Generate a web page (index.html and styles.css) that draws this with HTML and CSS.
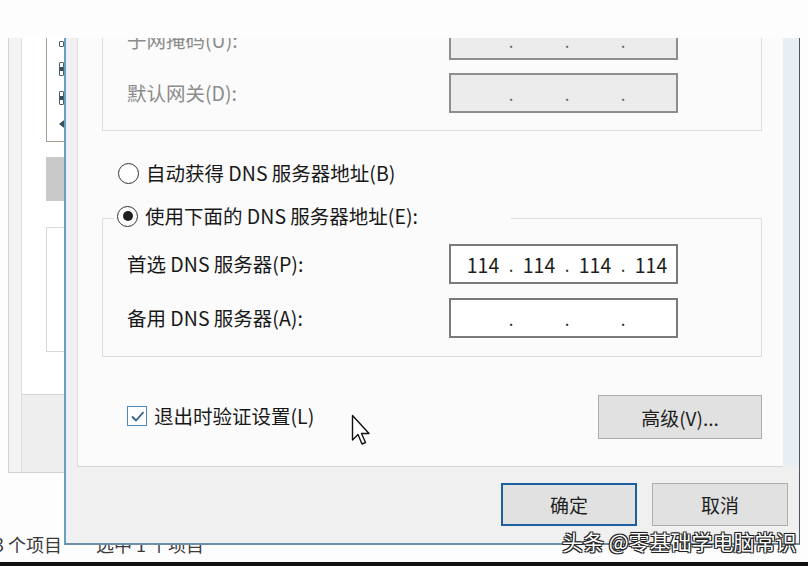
FILE: index.html
```html
<!DOCTYPE html>
<html lang="zh-CN">
<head>
  <meta charset="UTF-8" />
  <meta name="viewport" content="width=device-width, initial-scale=1.0" />
  <title>Internet 协议版本 4 (TCP/IPv4) 属性</title>
  <link rel="stylesheet" href="styles.css">
</head>
<body>
  <div class="screen">
    <div class="top-band"></div>

    <div class="desktop">
      <!-- explorer window behind the dialog -->
      <div class="explorer">
        <div class="nav-pane">
          <div class="nav-strip"></div>
          <div class="nav-list">
            <div class="tree-box">
              <span class="mark mark-sq"></span>
              <span class="mark mark-tall"></span>
              <span class="mark mark-tall"></span>
              <span class="mark mark-arrow"></span>
            </div>
            <div class="tree-gray"></div>
            <div class="tree-box2"></div>
          </div>
        </div>
        <div class="status">
          <span>3 个项目</span>
          <span>选中 1 个项目</span>
        </div>
      </div>

      <!-- IPv4 properties dialog -->
      <div class="dialog">
        <div class="dialog-body">
          <div class="page">
            <div class="group ip-group">
              <div class="row">
                <span class="label disabled">子网掩码(U):</span>
                <div class="ip disabled"><span class="field"></span><span class="dot">.</span><span class="field"></span><span class="dot">.</span><span class="field"></span><span class="dot">.</span><span class="field"></span></div>
              </div>
              <div class="row">
                <span class="label disabled">默认网关(D):</span>
                <div class="ip disabled"><span class="field"></span><span class="dot">.</span><span class="field"></span><span class="dot">.</span><span class="field"></span><span class="dot">.</span><span class="field"></span></div>
              </div>
            </div>

            <label class="option auto-dns">
              <span class="radio"></span>
              <span class="option-text">自动获得 DNS 服务器地址(B)</span>
            </label>

            <fieldset class="group dns-group">
              <legend class="option">
                <span class="radio checked"></span>
                <span class="option-text">使用下面的 DNS 服务器地址(E):</span>
              </legend>
              <div class="row">
                <span class="label">首选 DNS 服务器(P):</span>
                <div class="ip"><span class="field">114</span><span class="dot">.</span><span class="field">114</span><span class="dot">.</span><span class="field">114</span><span class="dot">.</span><span class="field">114</span></div>
              </div>
              <div class="row">
                <span class="label">备用 DNS 服务器(A):</span>
                <div class="ip"><span class="field"></span><span class="dot">.</span><span class="field"></span><span class="dot">.</span><span class="field"></span><span class="dot">.</span><span class="field"></span></div>
              </div>
            </fieldset>

            <div class="page-footer">
              <label class="option validate">
                <span class="check">
                  <svg width="17" height="17" viewBox="0 0 17 17"><path d="M3 8.5 L7 12.5 L14.5 4" fill="none" stroke="#2f5f8a" stroke-width="1.8"/></svg>
                </span>
                <span class="option-text">退出时验证设置(L)</span>
              </label>
              <button class="btn advanced">高级(V)...</button>
            </div>
          </div>
          <div class="side-strip"></div>
        </div>

        <div class="buttons">
          <button class="btn primary">确定</button>
          <button class="btn">取消</button>
        </div>
      </div>

      <svg class="cursor" width="22" height="34" viewBox="0 0 22 34">
        <path d="M1.5 1.5 L1.5 26 L7 20.5 L11 30 L14.5 28.5 L10.5 19.5 L18 19.5 Z" fill="#fff" stroke="#111" stroke-width="1.4" stroke-linejoin="round"/>
      </svg>
    </div>

    <div class="watermark">头条 @零基础学电脑常识</div>
    <div class="bottom-edge"></div>
  </div>
</body>
</html>
```

FILE: styles.css
```css
* {
  box-sizing: border-box;
}

body {
  margin: 0;
  background: #fdfdfd;
  font-family: "Noto Sans CJK SC", "Noto Sans", sans-serif;
  color: #181818;
}

.screen {
  position: relative;
  width: 808px;
  height: 566px;
  overflow: hidden;
  background: #fdfdfd;
}

.top-band {
  height: 38px;
  background: #fdfdfd;
}

.desktop {
  position: relative;
  height: 524px;
}

/* explorer behind */
.explorer {
  height: 100%;
  display: flex;
  flex-direction: column;
}

.nav-pane {
  margin-left: 8px;
  width: 90px;
  height: 435px;
  display: flex;
  background: #eeeeee;
  border-left: 1px solid #d2d2d2;
  border-bottom: 1px solid #d2d2d2;
}

.nav-strip {
  width: 13px;
  background: #f4f4f4;
  border-right: 1px solid #dedede;
}

.nav-list {
  flex: 1;
  height: 357px;
  padding-left: 24px;
  display: flex;
  flex-direction: column;
  background: #fff;
  border-bottom: 1px solid #d4d4d4;
}

.tree-box {
  height: 104px;
  padding: 3px 0 0 12px;
  display: flex;
  flex-direction: column;
  gap: 15px;
  border-left: 1px solid #a89d91;
  border-bottom: 1px solid #a89d91;
}

.mark {
  display: block;
  width: 5px;
  border: 1px solid #4a5e6c;
  border-radius: 1px;
}

.mark-sq {
  height: 6px;
}

.mark-tall {
  height: 14px;
  background: linear-gradient(#fff 30%, #3a4c58 30%, #3a4c58 70%, #fff 70%);
}

.mark-arrow {
  width: 0;
  height: 0;
  border: none;
  border-top: 4px solid transparent;
  border-bottom: 4px solid transparent;
  border-right: 5px solid #3a4c58;
}

.tree-gray {
  margin-top: 15px;
  height: 44px;
  background: #c9c9c9;
}

.tree-box2 {
  margin-top: 26px;
  height: 125px;
  border: 1px solid #d8d8d8;
}

.status {
  margin-top: auto;
  margin-bottom: 7px;
  margin-left: -6px;
  display: flex;
  gap: 34px;
  font-size: 18px;
  line-height: 22px;
  color: #3a3a3a;
}

/* dialog */
.dialog {
  position: absolute;
  left: 64px;
  top: 0;
  width: 736px;
  height: 507px;
  display: flex;
  flex-direction: column;
  background: #f0f0f0;
  border-left: 2px solid #62a2c0;
  border-right: 1px solid #4c5864;
  border-bottom: 2px solid #6f8fa7;
}

.dialog-body {
  height: 429px;
  display: flex;
  padding-left: 11px;
}

.page {
  width: 706px;
  height: 100%;
  padding: 0 21px 0 24px;
  display: flex;
  flex-direction: column;
  overflow: hidden;
  background: #fbfbfb;
  border-left: 1px solid #dcdcdc;
  border-bottom: 1px solid #d6d6d6;
}

.side-strip {
  flex: 1;
  background: #e9eef2;
}

.group {
  margin: 0;
  border: 1px solid #dcdcdc;
  min-width: 0;
}

.ip-group {
  margin-top: -30px;
  padding: 11px 0 17px 24px;
  display: flex;
  flex-direction: column;
  gap: 13px;
}

.row {
  display: grid;
  grid-template-columns: 322px 229px;
  align-items: center;
}

.label {
  font-size: 19.5px;
  line-height: 26px;
}

.label.disabled {
  color: #8c8c8c;
}

.ip {
  height: 40px;
  padding-left: 7px;
  display: flex;
  align-items: center;
  background: #fff;
  border: 2px solid #7a7a7a;
  font-size: 19.5px;
  color: #1e1e1e;
}

.ip.disabled {
  background: #ececec;
  border-color: #8e8e8e;
  color: #666;
}

.field {
  width: 50px;
  text-align: center;
}

.dot {
  width: 6px;
  text-align: center;
  font-size: 17px;
}

.option {
  display: flex;
  align-items: center;
  font-size: 19.5px;
  line-height: 24px;
}

.option-text {
  margin-left: 7px;
}

.auto-dns {
  margin: 30px 0 0 16px;
}

.radio {
  width: 21px;
  height: 21px;
  display: grid;
  place-items: center;
  border: 1.5px solid #333;
  border-radius: 50%;
  background: #fff;
}

.radio.checked::after {
  content: "";
  width: 10px;
  height: 10px;
  border-radius: 50%;
  background: #1f1f1f;
}

.dns-group {
  margin-top: 19px;
  padding: 12px 0 18px 0;
  display: flex;
  flex-direction: column;
  gap: 14px;
}

.dns-group .row {
  padding-left: 24px;
  grid-template-columns: 322px 229px;
}

.dns-group legend {
  width: 397px;
  height: 28px;
  margin-left: 11px;
  padding: 0 0 4px 3px;
  background: #fbfbfb;
}

.page-footer {
  margin-top: 38px;
  display: flex;
  justify-content: space-between;
  align-items: flex-start;
}

.validate {
  margin: 9px 0 0 25px;
}

.check {
  width: 20px;
  height: 20px;
  display: grid;
  place-items: center;
  background: #fff;
  border: 1.5px solid #4f86b5;
}

.btn {
  width: 136px;
  height: 43px;
  font-family: inherit;
  font-size: 19px;
  color: #1e1e1e;
  background: #e1e1e1;
  border: 1px solid #adadad;
  padding: 0;
}

.advanced {
  width: 164px;
  height: 44px;
}

.buttons {
  flex: 1;
  display: flex;
  justify-content: flex-end;
  align-items: flex-start;
  gap: 15px;
  padding: 16px 11px 0 0;
}

.btn.primary {
  border: 2px solid #1c609f;
}

.cursor {
  position: absolute;
  left: 351px;
  top: 376px;
}

.watermark {
  position: absolute;
  left: 562px;
  top: 528px;
  font-size: 21px;
  line-height: 26px;
  color: #fff;
  text-shadow: -1px -1px 0 #222, 1px -1px 0 #222, -1px 1px 0 #222, 1px 1px 0 #222, 0 0 2px #000;
}

.bottom-edge {
  position: absolute;
  left: 0;
  bottom: 0;
  width: 100%;
  height: 4px;
  background: #111;
}
```
